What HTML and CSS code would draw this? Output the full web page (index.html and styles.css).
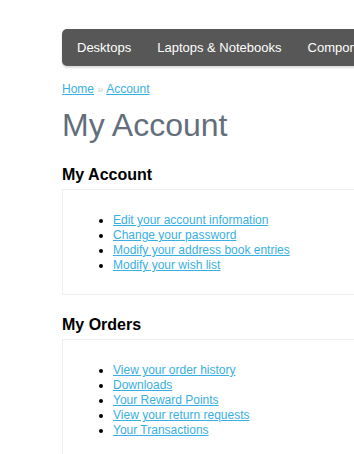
FILE: index.html
```html
<!DOCTYPE html>
<html lang="en">

<head>
  <meta charset="UTF-8">
  <title>My Account</title>
  <link rel="stylesheet" href="styles.css">
</head>

<body>
  <div class="container">
    <!-- Top menu -->
    <div class="menu">
      <ul>
        <li><a href="#">Desktops</a></li>
        <li><a href="#">Laptops &amp; Notebooks</a></li>
        <li><a href="#">Components</a></li>
        <li><a href="#">Tablets</a></li>
      </ul>
    </div>

    <div class="breadcrumb">
      <a href="#">Home</a> <span class="sep">&raquo;</span> <a href="#">Account</a>
    </div>
    <h1>My Account</h1>

    <h2>My Account</h2>
    <div class="content">
      <ul>
        <li><a href="#">Edit your account information</a></li>
        <li><a href="#">Change your password</a></li>
        <li><a href="#">Modify your address book entries</a></li>
        <li><a href="#">Modify your wish list</a></li>
      </ul>
    </div>

    <h2>My Orders</h2>
    <div class="content">
      <ul>
        <li><a href="#">View your order history</a></li>
        <li><a href="#">Downloads</a></li>
        <li><a href="#">Your Reward Points</a></li>
        <li><a href="#">View your return requests</a></li>
        <li><a href="#">Your Transactions</a></li>
      </ul>
    </div>
  </div>
</body>

</html>
```

FILE: styles.css
```css
html, body {
  overflow: hidden;
}

body {
  margin: 0;
  font-family: 'Liberation Sans', Arial, sans-serif;
  font-size: 12px;
  color: #000;
  background: #fff;
}

a {
  color: #38B0E3;
}

.container {
  width: 980px;
  padding: 29px 0 0 62px;
}

/* Top menu */
.menu {
  height: 37px;
  background: #575757;
  border-radius: 5px;
  box-shadow: 0 2px 2px #ddd;
}

.menu ul {
  display: flex;
  margin: 0;
  padding: 0 2px;
  list-style: none;
}

.menu li a {
  display: block;
  padding: 11px 13px 10px 13px;
  font-size: 13px;
  line-height: 16px;
  color: #fff;
  text-decoration: none;
  white-space: nowrap;
}

.breadcrumb {
  margin-top: 16px;
  line-height: 15px;
  color: #ccc;
}

.breadcrumb .sep {
  font-size: 11px;
}

h1 {
  margin: 9px 0 0 0;
  font-size: 32px;
  font-weight: normal;
  line-height: 38px;
  color: #636E7B;
}

h2 {
  margin: 21px 0 4px 0;
  font-size: 16px;
  line-height: 20px;
  color: #000;
}

.content + h2 {
  margin-top: 1px;
}

.content {
  padding: 10px;
  border: 1px solid #eee;
  margin-bottom: 20px;
}

.content ul {
  margin: 13px 0 11px 0;
  padding-left: 40px;
}

.content li {
  line-height: 15px;
}
```
